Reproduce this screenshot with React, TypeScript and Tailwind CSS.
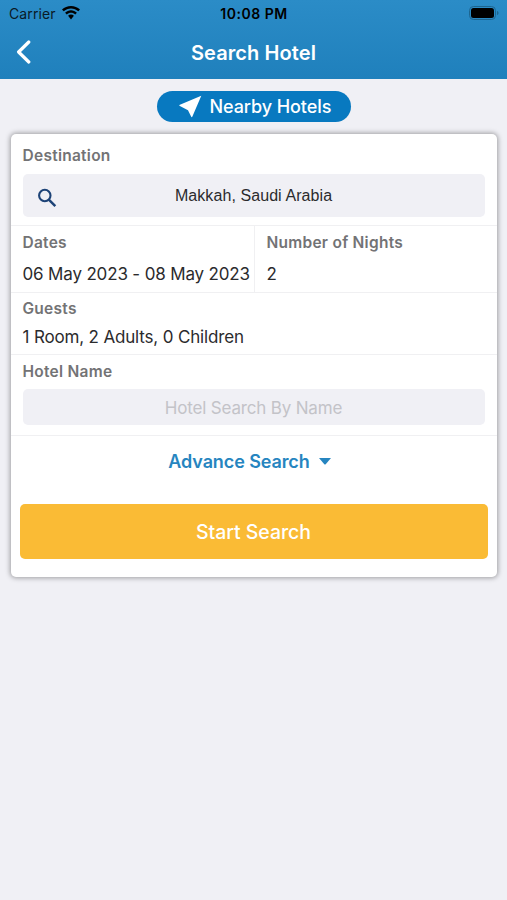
import React from "react";

interface FieldProps {
  label: string;
  value: string;
  className?: string;
  valueClassName?: string;
}

const Field: React.FC<FieldProps> = ({
  label,
  value,
  className = "",
  valueClassName = "",
}) => {
  return (
    <div className={`flex flex-col whitespace-nowrap ${className}`}>
      <Label>{label}</Label>
      <span
        className={`text-[17px] leading-5 tracking-[-0.16px] text-[#2b2b2d] ${valueClassName}`}
      >
        {value}
      </span>
    </div>
  );
};

const Label: React.FC<{ children: React.ReactNode }> = ({ children }) => (
  <span className="block text-[15.5px] leading-5 font-semibold tracking-[0.26px] text-[#737375]">
    {children}
  </span>
);

const StatusBar: React.FC = () => {
  return (
    <div className="grid h-[27px] grid-cols-3 items-center pr-2 pl-[9px] text-[#0a1a26]">
      <div className="flex items-center gap-[6px]">
        <span className="text-[14px] leading-4 tracking-[0.1px]">Carrier</span>
        <svg width="18" height="14" viewBox="0 0 18 14" className="-mt-0.5 fill-black">
          <path d="M9 0C5.6 0 2.4 1.3 0 3.6L1.7 5.3C3.7 3.4 6.2 2.4 9 2.4s5.3 1 7.3 2.9L18 3.6C15.6 1.3 12.4 0 9 0Z" />
          <path d="M9 4.3c-2.2 0-4.3.9-5.9 2.4l1.7 1.7C5.9 7.3 7.4 6.7 9 6.7s3.1.6 4.2 1.7l1.7-1.7C13.3 5.2 11.2 4.3 9 4.3Z" />
          <path d="M9 8.6c-1.1 0-2.1.4-2.9 1.1L9 13.5l2.9-3.8C11.1 9 10.1 8.6 9 8.6Z" />
        </svg>
      </div>
      <span className="text-center text-[14px] leading-4 font-semibold tracking-[0.5px] whitespace-nowrap text-black">
        10:08 PM
      </span>
      <svg width="30" height="14" viewBox="0 0 30 14" className="-mt-0.5 justify-self-end">
        <rect x="0.5" y="0.5" width="26" height="13" rx="4" fill="none" stroke="#1d658f" />
        <rect x="2" y="2" width="23" height="10" rx="2.5" fill="#000" />
        <path d="M28 5c1 .3 1.5 1 1.5 2S29 8.7 28 9Z" fill="#1d658f" />
      </svg>
    </div>
  );
};

const NavBar: React.FC = () => {
  return (
    <div className="grid h-[50px] grid-cols-[40px_1fr_40px] items-center">
      <button aria-label="Back" className="pl-4">
        <svg width="16" height="24" viewBox="0 0 16 24" fill="none">
          <path
            d="M12.8 2 2.6 12l10.2 10"
            stroke="#fff"
            strokeWidth="3.2"
            strokeLinecap="round"
            strokeLinejoin="round"
          />
        </svg>
      </button>
      <h1 className="pt-px text-center text-[20px] leading-6 font-semibold tracking-[0.1px] text-white">
        Search Hotel
      </h1>
    </div>
  );
};

export default function App() {
  return (
    <div className="flex min-h-screen flex-col bg-[#f0f0f5] font-['Inter','Liberation_Sans',sans-serif]">
      <header className="h-[79px] bg-linear-to-b from-[#2b8cc7] to-[#1f80bc]">
        <StatusBar />
        <NavBar />
      </header>

      <main className="flex flex-col items-center pt-3">
        <button className="flex h-[31px] w-[194px] items-center rounded-full bg-[#0879c0] pl-[22px] text-white">
          <svg width="23" height="23" viewBox="0 0 23 23" className="fill-white">
            <path d="M22.3.7 13.4 21.500q-.7 1.300-1.300-.1L9 15.200.9 11q-1.200-.6 0-1.200Z" />
          </svg>
          <span className="ml-2 pt-px text-[18px] leading-6 font-medium tracking-[-0.08px] whitespace-nowrap">
            Nearby Hotels
          </span>
        </button>

        <form className="mt-3 flex h-[443px] w-[486px] flex-col rounded-[5px] bg-white shadow-[0_0_5px_1px_rgba(0,0,0,0.35)]">
          <div className="h-[92px] border-b border-[#f0f0f2] px-3 pt-3">
            <Label>Destination</Label>
            <div className="mt-2 flex h-[43px] items-center rounded-[5px] bg-[#f0f0f5] px-[14px]">
              <svg width="20" height="20" viewBox="0 0 20 20" fill="none" className="mt-1 shrink-0">
                <circle cx="7.8" cy="7.5" r="5.7" stroke="#1d4377" strokeWidth="2.1" />
                <path d="m11.8 11.700 6.500 6.500" stroke="#1d4377" strokeWidth="2.500" />
              </svg>
              <span className="flex-1 pt-px pr-5 text-center font-['Liberation_Sans',Arial,sans-serif] text-[16px] leading-5 tracking-[0.08px] text-[#2b2b2d]">
                Makkah, Saudi Arabia
              </span>
            </div>
          </div>

          <div className="flex h-[67px] border-b border-[#f0f0f2]">
            <Field
              label="Dates"
              value="06 May 2023 - 08 May 2023"
              className="w-[244px] border-r border-[#f0f0f2] pt-[7px] pl-3"
              valueClassName="mt-[11px]"
            />
            <Field
              label="Number of Nights"
              value="2"
              className="pt-[7px] pl-3"
              valueClassName="mt-[11px]"
            />
          </div>

          <Field
            label="Guests"
            value="1 Room, 2 Adults, 0 Children"
            className="h-[62px] border-b border-[#f0f0f2] pt-[6px] pl-3"
            valueClassName="mt-2"
          />

          <div className="h-[81px] border-b border-[#f0f0f2] px-3 pt-[7px]">
            <Label>Hotel Name</Label>
            <input
              type="text"
              placeholder="Hotel Search By Name"
              className="mt-[7px] block h-9 w-full rounded-[5px] bg-[#f0f0f5] pt-0.5 text-center text-[17px] tracking-[-0.17px] placeholder:text-[#c3c3c8]"
            />
          </div>

          <button
            type="button"
            className="flex h-[51px] items-center justify-center gap-[9px] pr-[8px] text-[18px] leading-6 font-semibold tracking-[-0.1px] text-[#2685c0]"
          >
            Advance Search
            <svg width="12" height="7" viewBox="0 0 12 7" className="fill-[#2685c0]">
              <path d="M0 0h12L6.7 6.2q-.7.7-1.4 0Z" />
            </svg>
          </button>

          <button
            type="button"
            className="mx-[9px] mt-[17px] h-[55px] rounded-[5px] bg-[#fabb35] pt-0.5 text-[19.5px] font-medium tracking-[-0.05px] text-white"
          >
            Start Search
          </button>
        </form>
      </main>
    </div>
  );
}
